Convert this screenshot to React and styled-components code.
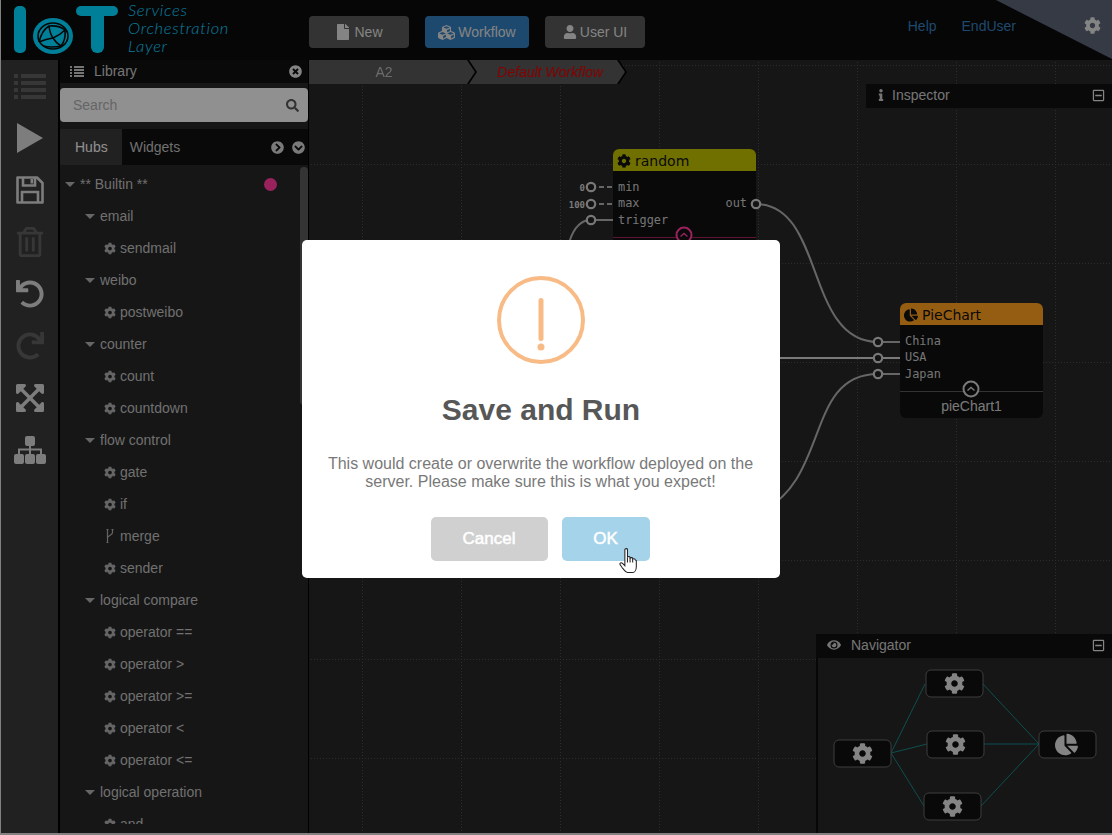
import React from 'react';
import styled, { createGlobalStyle } from 'styled-components';
import {
  FaFile, FaCubes, FaUser, FaCog, FaInfo, FaEye, FaRegMinusSquare, FaChartPie,
  FaTimesCircle, FaChevronCircleRight, FaChevronCircleDown, FaSearch,
  FaRegTrashAlt, FaUndo, FaRedo, FaExpandArrowsAlt,
} from 'react-icons/fa';

const GlobalStyle = createGlobalStyle`
  html, body { margin: 0; padding: 0; background: #d8d8d8; }
  body { font-family: "Liberation Sans", Arial, sans-serif; font-size: 14px; overflow: hidden; }
`;

const Page = styled.div`
  width: 1111px;
  height: 833px;
  margin-left: 1px;
  display: flex;
  flex-direction: column;
  overflow: hidden;
  background: #252525;
`;

const Header = styled.header`
  position: relative;
  height: 60px;
  flex: none;
  display: flex;
  align-items: center;
  background: #0a0a0a;
`;

const Brand = styled.div`
  width: 308px;
  flex: none;
  display: flex;
  gap: 8px;
  padding-left: 13px;
  box-sizing: border-box;
  align-items: center;
`;

const BrandText = styled.div`
  font-family: Lato, sans-serif;
  font-style: italic;
  font-weight: 300;
  font-size: 16.5px;
  line-height: 18px;
  letter-spacing: 0.7px;
  color: #12d0ff;
  margin-top: -5px;
`;

const NavButtons = styled.nav`
  display: flex;
  gap: 16px;
  margin-top: 4px;
`;

const NavButton = styled.button`
  height: 32px;
  width: ${p => p.$width}px;
  border: 0;
  border-radius: 4px;
  padding: 0;
  display: flex;
  align-items: center;
  justify-content: center;
  gap: 3px;
  font: 14px "Liberation Sans", Arial, sans-serif;
  color: #ddd;
  background: ${p => (p.$active ? '#337ab7' : '#555')};
  svg { font-size: ${p => p.$icon || 14}px; }
`;

const HeaderLinks = styled.div`
  margin-left: auto;
  margin-right: 96px;
  display: flex;
  gap: 25px;
  color: #337ab7;
  margin-top: -8px;
`;

const Corner = styled.div`
  position: absolute;
  top: 0;
  right: 0;
  width: 116px;
  height: 59px;
  background: #5a6274;
  clip-path: polygon(0 0, 100% 0, 100% 100%);
`;

const CornerGear = styled(FaCog)`
  position: absolute;
  top: 17px;
  right: 11px;
  font-size: 17px;
  color: #ddd;
`;

const Body = styled.div`
  flex: 1;
  display: flex;
  min-height: 0;
`;

const Toolbar = styled.aside`
  width: 57px;
  flex: none;
  display: flex;
  flex-direction: column;
  background: #373737;
  border-right: 2px solid #000;
`;

const ToolButton = styled.div`
  height: 52px;
  flex: none;
  display: flex;
  align-items: center;
  justify-content: center;
  color: ${p => (p.$off ? '#5c5c5c' : '#d0d0d0')};
  font-size: ${p => p.$size || 28}px;
`;

const Glyph = styled.svg`
  display: block;
  fill: currentColor;
`;

const Library = styled.section`
  width: 248px;
  flex: none;
  display: flex;
  flex-direction: column;
  background: #252525;
  border-right: 1px solid #000;
  min-height: 0;
`;

const PanelTitle = styled.div`
  height: ${p => p.$height || 23}px;
  box-sizing: border-box;
  padding: 0 ${p => p.$right || 6}px ${p => (p.$height ? 2 : 1)}px ${p => p.$left || 10}px;
  flex: none;
  display: flex;
  align-items: center;
  gap: ${p => p.$gap || 10}px;
  background: #101010;
  color: #c4c4c4;
`;

const TitleEnd = styled.span`
  margin-left: auto;
  display: flex;
  color: #ddd;
  font-size: 13px;
`;

const SearchBox = styled.div`
  height: 34px;
  margin-top: 5px;
  flex: none;
  display: flex;
  align-items: center;
  justify-content: space-between;
  padding: 0 9px 0 13px;
  background: #f0f0f0;
  border-radius: 4px;
  color: #a9a9a9;
  svg { color: #555; font-size: 13px; }
`;

const TabBar = styled.div`
  height: 36px;
  margin-top: 7px;
  flex: none;
  display: flex;
  align-items: stretch;
  background: #101010;
`;

const Tab = styled.div`
  display: flex;
  align-items: center;
  padding: 0 ${p => (p.$active ? 14 : 8)}px 0 ${p => (p.$active ? 15 : 8)}px;
  background: ${p => (p.$active ? '#383838' : 'transparent')};
  color: ${p => (p.$active ? '#eee' : '#bbb')};
`;

const TabIcons = styled.div`
  margin-left: auto;
  display: flex;
  align-items: center;
  gap: 8px;
  padding-right: 3px;
  font-size: 13px;
  color: #ccc;
`;

const TreeWrap = styled.div`
  position: relative;
  flex: 1;
  min-height: 0;
  margin-bottom: 9px;
  padding-top: 3px;
  overflow: hidden;
`;

const TreeRow = styled.div`
  height: 32px;
  display: flex;
  align-items: center;
  padding-left: ${p => [5, 25, 44][p.$level]}px;
  color: #bbb;
  white-space: nowrap;
`;

const Caret = styled.span`
  width: 0;
  height: 0;
  margin-right: 5px;
  border-left: 5px solid transparent;
  border-right: 5px solid transparent;
  border-top: 5px solid #aaa;
`;

const LeafIcon = styled.span`
  width: 12px;
  margin-right: 4px;
  display: flex;
  justify-content: center;
  font-size: 13px;
  color: #a8a8a8;
`;

const StatusDot = styled.span`
  position: absolute;
  left: 204px;
  top: 13px;
  width: 13px;
  height: 13px;
  border-radius: 50%;
  background: #ff3a9c;
`;

const ScrollThumb = styled.div`
  position: absolute;
  top: 2px;
  right: 0;
  width: 8px;
  height: 238px;
  border-radius: 4px;
  background: #585858;
`;

const Canvas = styled.main`
  position: relative;
  flex: 1;
  min-width: 0;
  overflow: hidden;
  background: #252525;
`;

const Layer = styled.svg`
  position: absolute;
  top: 0;
  left: 0;
  pointer-events: none;
`;

const Crumbs = styled.div`
  position: relative;
  display: flex;
  height: 24px;
`;

const CrumbShell = styled.div`
  position: relative;
  z-index: ${p => (p.$first ? 1 : 0)};
  margin-left: ${p => (p.$first ? 0 : -8)}px;
  filter: drop-shadow(2px 0 0 #000);
`;

const Crumb = styled.div`
  width: ${p => (p.$first ? 166 : 158)}px;
  height: 24px;
  padding: ${p => (p.$first ? '0 16px 0 0' : '0 0 0 8px')};
  box-sizing: border-box;
  display: flex;
  align-items: center;
  justify-content: center;
  background: #555;
  color: ${p => (p.$first ? '#b4b4b4' : '#e00000')};
  font-style: ${p => (p.$first ? 'normal' : 'italic')};
  clip-path: polygon(0 0, calc(100% - 8px) 0, 100% 50%, calc(100% - 8px) 100%, 0 100%);
`;

const FloatPanel = styled.div`
  position: absolute;
  top: ${p => p.$top}px;
  left: ${p => p.$left}px;
  right: 0;
`;

const NavigatorBody = styled.div`
  height: 175px;
  border-left: 2px solid #0c0c0c;
  background: #252525;
`;

const NodeCard = styled.div`
  position: absolute;
  left: ${p => p.$x}px;
  top: ${p => p.$y}px;
  width: 143px;
  background: #101010;
  border-radius: 6px;
`;

const NodeHead = styled.div`
  height: 22px;
  box-sizing: border-box;
  padding: 1px 0 0 4px;
  display: flex;
  align-items: center;
  gap: 4px;
  border-radius: 6px 6px 0 0;
  background: ${p => p.$color};
  color: #111;
  font: 14px "DejaVu Sans", sans-serif;
  svg { font-size: 14px; }
`;

const NodePorts = styled.div`
  padding: 8px 9px 0 5px;
  font: 11.9px/16.4px "DejaVu Sans Mono", monospace;
  color: #c4c4c4;
`;

const PortRow = styled.div`
  display: flex;
  justify-content: space-between;
  height: 16.4px;
`;

const NodeFoot = styled.div`
  position: relative;
  margin-top: 9px;
  height: ${p => p.$height}px;
  box-sizing: border-box;
  padding-top: 2px;
  border-top: 1px solid ${p => p.$line};
  display: flex;
  align-items: center;
  justify-content: center;
  color: #ccc;
`;

const Collapse = styled.svg`
  position: absolute;
  left: 62px;
  top: -12px;
`;

const Overlay = styled.div`
  position: fixed;
  inset: 0;
  z-index: 10;
  display: flex;
  align-items: flex-start;
  justify-content: center;
  padding: 240px 30px 0 0;
  background: rgba(0, 0, 0, 0.4);
`;

const Modal = styled.div`
  position: relative;
  width: 478px;
  height: 338px;
  box-sizing: border-box;
  padding-top: 36px;
  border-radius: 5px;
  background: #fff;
  display: flex;
  flex-direction: column;
  align-items: center;
`;

const ModalTitle = styled.h2`
  margin: 26px 0 0;
  font: 600 30px/40px "Liberation Sans", Arial, sans-serif;
  color: #575757;
`;

const ModalText = styled.p`
  margin: 25px 1px 0 0;
  width: 440px;
  text-align: center;
  font: 16px/18px "Liberation Sans", Arial, sans-serif;
  color: #797979;
`;

const ModalActions = styled.div`
  margin: 26px 2px 0 0;
  display: flex;
  gap: 14px;
`;

const ModalButton = styled.button`
  height: 44px;
  width: ${p => p.$width}px;
  border: 0;
  padding: 0;
  border-radius: 5px;
  background: ${p => p.$color};
  color: #fff;
  font: 17px "Liberation Sans", Arial, sans-serif;
  -webkit-text-stroke: 0.5px #fff;
`;

const HandCursor = styled.svg`
  position: absolute;
  left: 317px;
  top: 308px;
`;

function ListIcon({ w, h, barX, sq }) {
  return (
    <Glyph width={w} height={h} viewBox={`0 0 ${w} ${h}`}>
      {[0, 1, 2, 3].map(i => (
        <g key={i}>
          <rect x="0" y={(i * (h - sq)) / 3} width={sq} height={sq} />
          <rect x={barX} y={(i * (h - sq)) / 3} width={w - barX} height={sq} />
        </g>
      ))}
    </Glyph>
  );
}

function PlayIcon() {
  return (
    <Glyph width="26" height="30" viewBox="0 0 26 30">
      <polygon points="0,0 26,15 0,30" />
    </Glyph>
  );
}

function SaveIcon() {
  return (
    <svg width="28" height="28" viewBox="0 0 28 28" fill="none" stroke="currentColor" strokeWidth="2.6" style={{ display: 'block' }}>
      <path d="M1.5 1.5H21L26.5 7V26.5H1.5Z" strokeLinejoin="round" />
      <path d="M7 1.5V9.5H19V1.5" />
      <path d="M6 26.5V16H22V26.5" />
      <rect x="14.5" y="3" width="2.6" height="4.5" fill="currentColor" stroke="none" />
    </svg>
  );
}

function SitemapIcon() {
  return (
    <Glyph width="32" height="28" viewBox="0 0 32 28">
      <rect x="11" y="0" width="10" height="10" rx="2" />
      <rect x="0" y="18" width="10" height="10" rx="2" />
      <rect x="11" y="18" width="10" height="10" rx="2" />
      <rect x="22" y="18" width="10" height="10" rx="2" />
      <path d="M16 10V18M5 18V13.5H27V18" fill="none" stroke="currentColor" strokeWidth="2" />
    </Glyph>
  );
}

function ForkIcon() {
  return (
    <svg width="10" height="14" viewBox="0 0 10 14" fill="none" stroke="currentColor" strokeWidth="1.2">
      <path d="M2.5 1V13M7.5 1V3.5C7.5 6 4 6 2.5 8.5" />
      <path d="M1.5 .5H3.5M6.5 .5H8.5M1.5 13.5H3.5" />
    </svg>
  );
}

const tree = [
  [0, '** Builtin **', 'caret'],
  [1, 'email', 'caret'],
  [2, 'sendmail', 'cog'],
  [1, 'weibo', 'caret'],
  [2, 'postweibo', 'cog'],
  [1, 'counter', 'caret'],
  [2, 'count', 'cog'],
  [2, 'countdown', 'cog'],
  [1, 'flow control', 'caret'],
  [2, 'gate', 'cog'],
  [2, 'if', 'cog'],
  [2, 'merge', 'fork'],
  [2, 'sender', 'cog'],
  [1, 'logical compare', 'caret'],
  [2, 'operator ==', 'cog'],
  [2, 'operator >', 'cog'],
  [2, 'operator >=', 'cog'],
  [2, 'operator <', 'cog'],
  [2, 'operator <=', 'cog'],
  [1, 'logical operation', 'caret'],
  [2, 'and', 'cog'],
];

const ports = [
  [591, 187], [591, 204], [591, 220], [756, 204],
  [878, 342], [878, 358], [878, 374],
];

const miniNodes = [
  { x: 834, y: 740, pie: false },
  { x: 926, y: 670, pie: false },
  { x: 927, y: 731, pie: false },
  { x: 924, y: 793, pie: false },
  { x: 1039, y: 731, pie: true },
];

const miniLinks = [
  [891, 753, 925, 684], [891, 753, 927, 744], [891, 753, 924, 806],
  [983, 684, 1039, 744], [984, 744, 1039, 744], [981, 806, 1039, 744],
];

// both layers use page coordinates, the canvas starts at 309,60
function WireLayer() {
  return (
    <Layer width="803" height="775" viewBox="309 60 803 775">
      <defs>
        <pattern id="grid" x="362" y="164" width="99" height="99" patternUnits="userSpaceOnUse">
          <path d="M0 0.5H99M0.5 0V99" stroke="#4c4c4c" strokeWidth="1" strokeDasharray="1 2" fill="none" />
        </pattern>
      </defs>
      <rect x="309" y="60" width="803" height="775" fill="url(#grid)" />
      <g fill="none" stroke="#aaa" strokeWidth="2">
        <path d="M756 204C825 204 805 342 878 342H900" />
        <path d="M600 358H900" stroke="#ccc" />
        <path d="M760 512C830 480 805 374 878 374H900" />
        <path d="M591 220C570 220 565 250 560 300" />
        <path d="M591 220H613" />
        <path d="M591 187H613M591 204H613" strokeDasharray="5 3" />
      </g>
    </Layer>
  );
}

function PortLayer() {
  return (
    <Layer width="803" height="775" viewBox="309 60 803 775">
      {ports.map(([x, y]) => (
        <circle key={`${x}-${y}`} cx={x} cy={y} r="4.2" fill="#202020" stroke="#c8c8c8" strokeWidth="2.2" />
      ))}
      <g fill="#ccc" fontFamily="DejaVu Sans Mono, monospace" fontSize="9" fontWeight="bold" textAnchor="end">
        <text x="585" y="191">0</text>
        <text x="585" y="208">100</text>
      </g>
    </Layer>
  );
}

function MiniMap() {
  return (
    <svg width="294" height="175" viewBox="818 658 294 175" style={{ display: 'block' }}>
      {miniLinks.map(([a, b, c, d]) => (
        <line key={`${a}${b}${c}${d}`} x1={a} y1={b} x2={c} y2={d} stroke="#178484" strokeWidth="1" />
      ))}
      {miniNodes.map(n => (
        <g key={`${n.x}-${n.y}`}>
          <rect x={n.x} y={n.y} width="57" height="27" rx="5" fill="#101010" stroke="#666" />
          {n.pie
            ? <FaChartPie x={n.x + 16} y={n.y + 2} size="23" color="#ddd" />
            : <FaCog x={n.x + 18} y={n.y + 3} size="21" color="#ddd" />}
        </g>
      ))}
    </svg>
  );
}

function Logo() {
  return (
    <svg width="106" height="48" viewBox="0 0 106 48">
      <g fill="#00d4ff">
        <rect x="0" y="0" width="12" height="47" rx="5" />
        <ellipse cx="39" cy="30" rx="20" ry="18" />
        <rect x="62" y="0" width="42" height="10" rx="5" />
        <rect x="77" y="0" width="13" height="47" rx="6" />
      </g>
      <g fill="none" stroke="#0a0a0a" strokeWidth="1.6">
        <ellipse cx="39" cy="30" rx="15" ry="13" />
        <path d="M25 36Q28 24 35 20Q45 19 51 24Q52 34 47 40Q38 42 29 40M35 20Q36 28 39 32Q46 29 51 24M39 32Q32 33 25 36M39 32Q42 37 47 40" />
      </g>
    </svg>
  );
}

function App() {
  return (
    <>
      <GlobalStyle />
      <Page>
        <Header>
          <Brand>
            <Logo />
            <BrandText>Services<br />Orchestration<br />Layer</BrandText>
          </Brand>
          <NavButtons>
            <NavButton $width={100} $icon={16}><FaFile />New</NavButton>
            <NavButton $width={104} $active $icon={17}><FaCubes />Workflow</NavButton>
            <NavButton $width={100}><FaUser />User UI</NavButton>
          </NavButtons>
          <HeaderLinks><span>Help</span><span>EndUser</span></HeaderLinks>
          <Corner />
          <CornerGear />
        </Header>
        <Body>
          <Toolbar>
            <ToolButton $off><ListIcon w={32} h={25} barX={7} sq={4} /></ToolButton>
            <ToolButton><PlayIcon /></ToolButton>
            <ToolButton><SaveIcon /></ToolButton>
            <ToolButton $off $size={30}><FaRegTrashAlt /></ToolButton>
            <ToolButton><FaUndo /></ToolButton>
            <ToolButton $off><FaRedo /></ToolButton>
            <ToolButton $size={32}><FaExpandArrowsAlt /></ToolButton>
            <ToolButton><SitemapIcon /></ToolButton>
          </Toolbar>
          <Library>
            <PanelTitle $left={10}>
              <ListIcon w={14} h={11} barX={4} sq={2} />
              Library
              <TitleEnd><FaTimesCircle /></TitleEnd>
            </PanelTitle>
            <SearchBox>Search<FaSearch /></SearchBox>
            <TabBar>
              <Tab $active>Hubs</Tab>
              <Tab>Widgets</Tab>
              <TabIcons><FaChevronCircleRight /><FaChevronCircleDown /></TabIcons>
            </TabBar>
            <TreeWrap>
              {tree.map(([level, label, kind]) => (
                <TreeRow key={label} $level={level}>
                  {kind === 'caret' ? <Caret /> : (
                    <LeafIcon>{kind === 'fork' ? <ForkIcon /> : <FaCog />}</LeafIcon>
                  )}
                  {label}
                </TreeRow>
              ))}
              <StatusDot />
              <ScrollThumb />
            </TreeWrap>
          </Library>
          <Canvas>
            <WireLayer />
            <Crumbs>
              <CrumbShell $first><Crumb $first>A2</Crumb></CrumbShell>
              <CrumbShell><Crumb>Default Workflow</Crumb></CrumbShell>
            </Crumbs>
            <FloatPanel $top={24} $left={557}>
              <PanelTitle $height={24} $left={9} $gap={5} $right={7}>
                <FaInfo size={12} />Inspector
                <TitleEnd><FaRegMinusSquare /></TitleEnd>
              </PanelTitle>
            </FloatPanel>
            <NodeCard $x={304} $y={89}>
              <NodeHead $color="#bbbb00"><FaCog />random</NodeHead>
              <NodePorts>
                <PortRow><span>min</span></PortRow>
                <PortRow><span>max</span><span>out</span></PortRow>
                <PortRow><span>trigger</span></PortRow>
              </NodePorts>
              <NodeFoot $height={34} $line="#a02058">
                <Collapse width="18" height="18" viewBox="0 0 18 18">
                  <circle cx="9" cy="9" r="7.5" fill="#101010" stroke="#ff3a9c" strokeWidth="2" />
                  <path d="M5.5 10.5L9 7.5L12.5 10.5" fill="none" stroke="#ff3a9c" strokeWidth="1.4" />
                </Collapse>
              </NodeFoot>
            </NodeCard>
            <NodeCard $x={591} $y={243}>
              <NodeHead $color="#f99b1f"><FaChartPie />PieChart</NodeHead>
              <NodePorts>
                <PortRow><span>China</span></PortRow>
                <PortRow><span>USA</span></PortRow>
                <PortRow><span>Japan</span></PortRow>
              </NodePorts>
              <NodeFoot $height={27} $line="#555">
                <Collapse width="18" height="18" viewBox="0 0 18 18">
                  <circle cx="9" cy="9" r="7.5" fill="#101010" stroke="#ccc" strokeWidth="2" />
                  <path d="M5.5 10.5L9 7.5L12.5 10.5" fill="none" stroke="#ccc" strokeWidth="1.4" />
                </Collapse>
                pieChart1
              </NodeFoot>
            </NodeCard>
            <PortLayer />
            <FloatPanel $top={574} $left={507}>
              <PanelTitle $height={24} $left={11} $gap={10} $right={7}>
                <FaEye size={14} />Navigator
                <TitleEnd><FaRegMinusSquare /></TitleEnd>
              </PanelTitle>
              <NavigatorBody><MiniMap /></NavigatorBody>
            </FloatPanel>
          </Canvas>
        </Body>
      </Page>
      <Overlay>
        <Modal>
          <svg width="88" height="88" viewBox="0 0 88 88">
            <circle cx="44" cy="44" r="42" fill="none" stroke="#f8bb86" strokeWidth="4" />
            <rect x="41.5" y="22" width="5" height="43" rx="2.5" fill="#f8bb86" />
            <circle cx="44" cy="71" r="3.5" fill="#f8bb86" />
          </svg>
          <ModalTitle>Save and Run</ModalTitle>
          <ModalText>
            This would create or overwrite the workflow deployed on the server. Please make sure this is what you expect!
          </ModalText>
          <ModalActions>
            <ModalButton $width={117} $color="#d0d0d0">Cancel</ModalButton>
            <ModalButton $width={88} $color="#a5d3e9">OK</ModalButton>
          </ModalActions>
          <HandCursor width="19" height="25" viewBox="0 0 18 24">
            <path
              d="M5.5 1.5C5.5 .3 8 .3 8 1.5V9C8 8 10.5 8 10.5 9V10C10.5 9 13 9 13 10V11C13 10 15.5 10 15.5 11.5L16.5 12V18C16.5 21 15 23.5 13 23.5H8C6 23.5 5 21 3 19L1 16C0 14.5 2 13.5 3.5 15L5.5 17Z"
              fill="#fff"
              stroke="#222"
              strokeWidth="1"
            />
            <path d="M8 9V14M10.5 9.5V14M13 10.5V14" fill="none" stroke="#222" strokeWidth="1" />
          </HandCursor>
        </Modal>
      </Overlay>
    </>
  );
}

export default App;
